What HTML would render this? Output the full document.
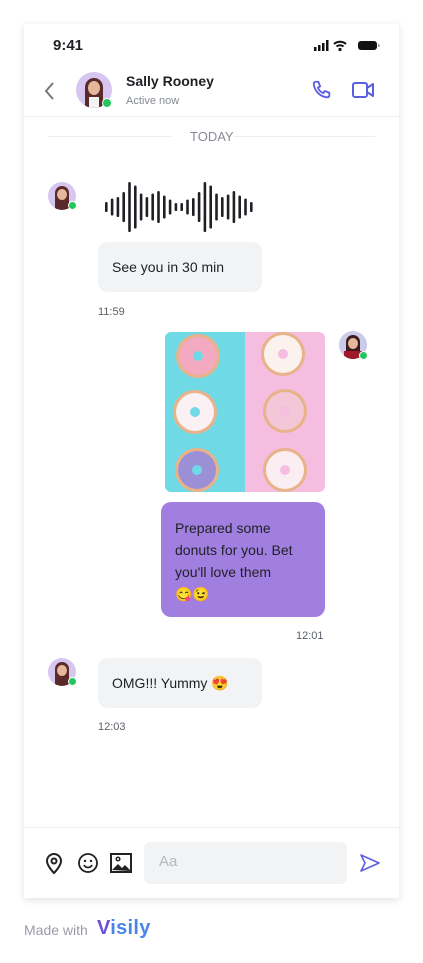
<!DOCTYPE html>
<html><head><meta charset="utf-8"><style>
*{margin:0;padding:0;box-sizing:border-box}
body{width:423px;height:963px;background:#fff;font-family:"Liberation Sans",sans-serif;position:relative;overflow:hidden;color:#1f2024}
.card{position:absolute;left:24px;top:24px;width:375px;height:874px;background:#fff;box-shadow:0 2px 8px rgba(0,0,0,.12)}
.abs{position:absolute}
.av{position:absolute;border-radius:50%;background:#d7c6ef;overflow:hidden}
.dot{position:absolute;border-radius:50%;background:#22c55e;border:1.5px solid #fff}
.bub{position:absolute;background:#f2f3f5;border-radius:10px;font-size:14px;color:#1f2024}
.time{position:absolute;font-size:11px;color:#5b5f6a}
</style></head><body>
<div class="card">
<div class="abs" style="left:29px;top:13px;font-size:15px;font-weight:bold">9:41</div>
<svg class="abs" style="left:290px;top:16px" width="66" height="12">
<rect x="0" y="7" width="2.5" height="4" fill="#111"/><rect x="4" y="5" width="2.5" height="6" fill="#111"/><rect x="8" y="3" width="2.5" height="8" fill="#111"/><rect x="12" y="0" width="2.5" height="11" fill="#111"/>
<path d="M20 4a9 9 0 0 1 12 0M22.5 6.5a5.5 5.5 0 0 1 7 0" stroke="#111" stroke-width="2" fill="none"/><circle cx="26" cy="9.5" r="1.6" fill="#111"/>
<rect x="44" y="1" width="19" height="9" rx="3" fill="#111"/><rect x="64" y="4" width="1.5" height="3" fill="#999"/>
</svg>
<svg class="abs" style="left:19px;top:57px" width="12" height="20"><path d="M10 2L3 10l7 8" stroke="#777" stroke-width="2" fill="none"/></svg>
<div class="av" style="left:52px;top:48px;width:36px;height:36px"><div style="position:absolute;left:9px;top:6px;width:18px;height:30px;background:#5a2a2a;border-radius:9px 9px 0 0"></div><div style="position:absolute;left:12px;top:9px;width:12px;height:14px;background:#e4b79a;border-radius:50%"></div><div style="position:absolute;left:13px;top:25px;width:10px;height:11px;background:#f3f3f3"></div></div>
<div class="dot" style="left:78px;top:74px;width:10px;height:10px"></div>
<div class="abs" style="left:102px;top:49px;font-size:14px;font-weight:bold">Sally Rooney</div>
<div class="abs" style="left:102px;top:71px;font-size:11px;color:#868a95">Active now</div>
<svg class="abs" style="left:287px;top:55px" width="22" height="22" viewBox="0 0 24 24"><path d="M5 3h3l2 5-2.5 1.5a11 11 0 0 0 6 6L15 13l5 2v3a2 2 0 0 1-2 2A16 16 0 0 1 3 5a2 2 0 0 1 2-2" stroke="#5b5fe0" stroke-width="2" fill="none" stroke-linejoin="round"/></svg>
<svg class="abs" style="left:328px;top:57px" width="23" height="18" viewBox="0 0 23 18"><rect x="1" y="2" width="14" height="14" rx="2" stroke="#5b5fe0" stroke-width="2" fill="none"/><path d="M15 7l6-4v12l-6-4" stroke="#5b5fe0" stroke-width="2" fill="none" stroke-linejoin="round"/></svg>
<div class="abs" style="left:0;top:92px;width:375px;height:1px;background:#eceef0"></div>
<div class="abs" style="left:24px;top:112px;width:124px;height:1px;background:#eceef0"></div>
<div class="abs" style="left:210px;top:112px;width:141px;height:1px;background:#eceef0"></div>
<div class="abs" style="left:166px;top:105px;font-size:13px;color:#868a95">TODAY</div>

<div class="av" style="left:24px;top:158px;width:28px;height:28px"><div style="position:absolute;left:7px;top:4px;width:14px;height:24px;background:#5a2a2a;border-radius:7px 7px 0 0"></div><div style="position:absolute;left:9px;top:7px;width:10px;height:11px;background:#e4b79a;border-radius:50%"></div></div>
<div class="dot" style="left:44px;top:177px;width:9px;height:9px"></div>
<svg class="abs" style="left:78px;top:155px" width="160" height="56" id="wave"></svg>
<div class="bub" style="left:74px;top:218px;width:164px;height:50px;padding:17px 14px">See you in 30 min</div>
<div class="time" style="left:74px;top:282px">11:59</div>

<div class="av" style="left:315px;top:307px;width:28px;height:28px;background:#c9cbe8"><div style="position:absolute;left:7px;top:4px;width:14px;height:24px;background:#3a1a1a;border-radius:7px 7px 0 0"></div><div style="position:absolute;left:9px;top:7px;width:10px;height:11px;background:#e4b79a;border-radius:50%"></div><div style="position:absolute;left:5px;top:20px;width:18px;height:8px;background:#a0182a"></div></div>
<div class="dot" style="left:335px;top:327px;width:9px;height:9px"></div>
<div class="abs" style="left:141px;top:308px;width:160px;height:160px;border-radius:6px;overflow:hidden;background:linear-gradient(90deg,#6fd9e6 50%,#f5bde0 50%)">
<svg width="160" height="160">
<g><circle cx="33" cy="24" r="22" fill="#e9b38a"/><circle cx="33" cy="24" r="19" fill="#f3a9c0"/><circle cx="33" cy="24" r="5" fill="#6fd9e6"/>
<circle cx="118" cy="22" r="22" fill="#e9b38a"/><circle cx="118" cy="22" r="19" fill="#fbf2ee"/><circle cx="118" cy="22" r="5" fill="#f5bde0"/>
<circle cx="30" cy="80" r="22" fill="#e9b38a"/><circle cx="30" cy="80" r="19" fill="#fbf0f4"/><circle cx="30" cy="80" r="5" fill="#6fd9e6"/>
<circle cx="120" cy="79" r="22" fill="#e9b38a"/><circle cx="120" cy="79" r="19" fill="#f3c7d8"/><circle cx="120" cy="79" r="5" fill="#f5bde0"/>
<circle cx="32" cy="138" r="22" fill="#e9b38a"/><circle cx="32" cy="138" r="19" fill="#9b8fd6"/><circle cx="32" cy="138" r="5" fill="#6fd9e6"/>
<circle cx="120" cy="138" r="22" fill="#e9b38a"/><circle cx="120" cy="138" r="19" fill="#fbeef2"/><circle cx="120" cy="138" r="5" fill="#f5bde0"/></g></svg></div>
<div class="bub" style="left:137px;top:478px;width:164px;height:115px;background:#a07fe0;padding:15px 14px;line-height:22px;color:#1f2024">Prepared some<br>donuts for you. Bet<br>you'll love them<br>😋😉</div>
<div class="time" style="left:272px;top:606px">12:01</div>

<div class="av" style="left:24px;top:634px;width:28px;height:28px"><div style="position:absolute;left:7px;top:4px;width:14px;height:24px;background:#5a2a2a;border-radius:7px 7px 0 0"></div><div style="position:absolute;left:9px;top:7px;width:10px;height:11px;background:#e4b79a;border-radius:50%"></div></div>
<div class="dot" style="left:44px;top:653px;width:9px;height:9px"></div>
<div class="bub" style="left:74px;top:634px;width:164px;height:50px;padding:17px 14px">OMG!!! Yummy 😍</div>
<div class="time" style="left:74px;top:697px">12:03</div>

<div class="abs" style="left:0;top:803px;width:375px;height:1px;background:#eceef0"></div>
<svg class="abs" style="left:20px;top:827px" width="20" height="24" viewBox="0 0 20 24"><path d="M10 22s-7-7-7-12a7 7 0 0 1 14 0c0 5-7 12-7 12z" stroke="#222" stroke-width="2" fill="none"/><circle cx="10" cy="10" r="2.5" stroke="#222" stroke-width="2" fill="none"/></svg>
<svg class="abs" style="left:53px;top:828px" width="22" height="22"><circle cx="11" cy="11" r="9" stroke="#222" stroke-width="1.8" fill="none"/><circle cx="8" cy="9" r="1.2" fill="#222"/><circle cx="14" cy="9" r="1.2" fill="#222"/><path d="M7 13a4.5 4.5 0 0 0 8 0" stroke="#222" stroke-width="1.8" fill="none"/></svg>
<svg class="abs" style="left:86px;top:829px" width="22" height="20"><rect x="1" y="1" width="20" height="18" stroke="#222" stroke-width="2" fill="none"/><circle cx="8" cy="6" r="1.8" stroke="#222" stroke-width="1.5" fill="none"/><path d="M2 17l6-6 4 4 3-3 6 6z" fill="#222"/></svg>
<div class="abs" style="left:120px;top:818px;width:203px;height:42px;background:#f2f3f5;border-radius:6px;padding:11px 15px;font-size:15px;color:#b5b8bf">Aa</div>
<svg class="abs" style="left:335px;top:829px" width="22" height="20"><path d="M2 2l18 8-18 8 4-8z" stroke="#5b5fe0" stroke-width="1.6" fill="none" stroke-linejoin="round"/></svg>
</div>
<div class="abs" style="left:24px;top:922px;font-size:14px;color:#9b9aad">Made with</div>
<div class="abs" style="left:97px;top:917px;font-size:20px;font-weight:bold;color:#4a86e8;letter-spacing:0.3px"><span style="color:#6b4fd8">V</span>isily</div>
<script>
var h=[10,17,20,30,50,43,27,20,27,32,23,15,8,8,15,18,30,50,43,27,20,25,32,23,17,10],s='';
for(var i=0;i<h.length;i++){s+='<rect x="'+(3+i*5.8)+'" y="'+(28-h[i]/2)+'" width="2.6" height="'+h[i]+'" rx="1.3" fill="#1f2024"/>';}
document.getElementById('wave').innerHTML=s;
</script>
</body></html>
